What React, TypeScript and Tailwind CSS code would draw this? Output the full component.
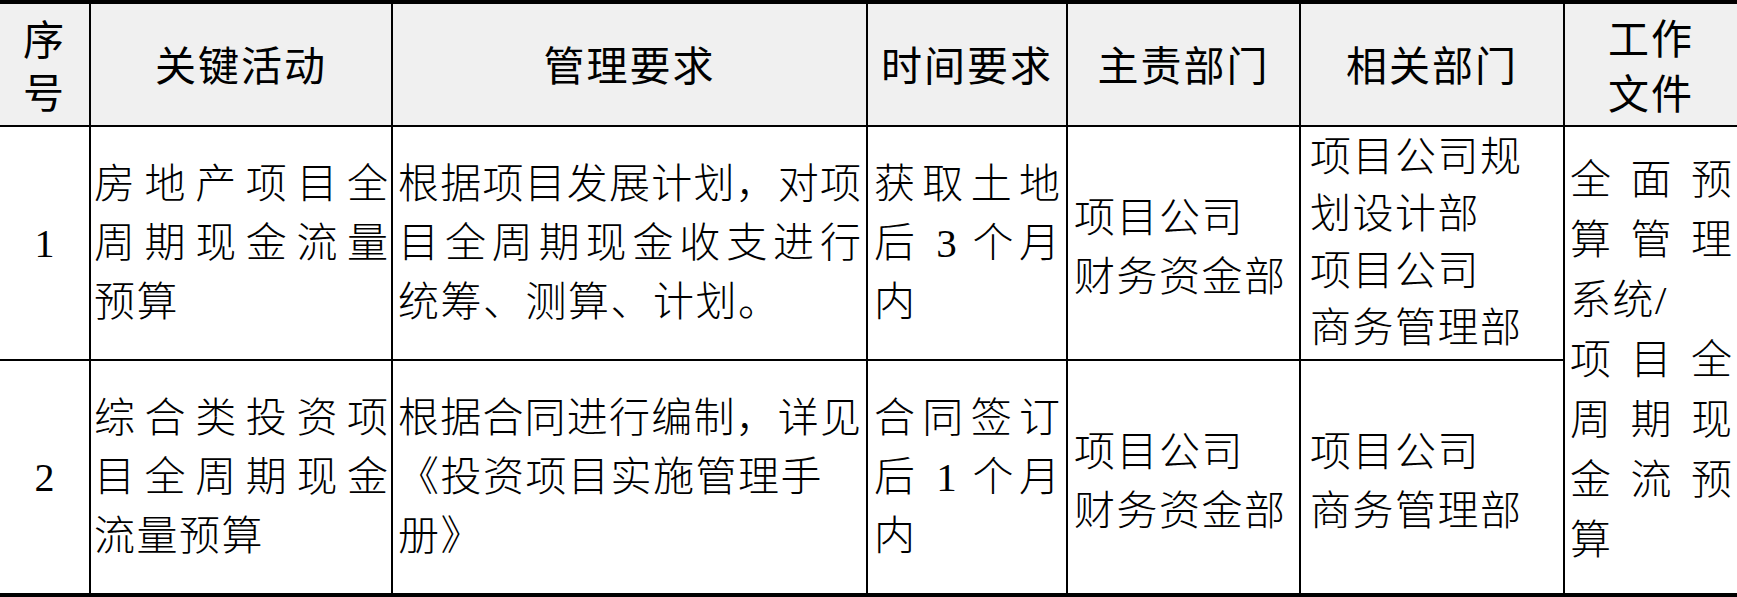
type Line = { t: string; j?: boolean };

const bodyLine = "tracking-[1.5px]";
const justLine = "tracking-normal text-justify [text-align-last:justify]";

function Cell({
  lines,
  className = "",
  lead = "leading-[59px]",
}: {
  lines: Line[];
  className?: string;
  lead?: string;
}) {
  return (
    <div className={`flex flex-col justify-center bg-white font-light ${lead} ${className}`}>
      {lines.map((l, i) => (
        <div key={i} className={l.j ? justLine : bodyLine}>
          {l.t}
        </div>
      ))}
    </div>
  );
}

function Head({ lines, lead = "leading-[59px]" }: { lines: string[]; lead?: string }) {
  return (
    <div className={`flex flex-col items-center justify-center bg-[#f0f0f0] pt-[6px] font-normal tracking-[2px] ${lead}`}>
      {lines.map((l) => (
        <div key={l}>{l}</div>
      ))}
    </div>
  );
}

function Num({ n }: { n: string }) {
  return (
    <div className="flex items-center justify-center bg-white pt-[2px] text-[40px]">
      {n}
    </div>
  );
}

export default function App() {
  return (
    <div className="w-[1737px] h-[597px] bg-white text-black text-[41px] font-['Liberation_Serif','Noto_Sans_CJK_SC',serif]">
      <div className="grid grid-cols-[89px_300px_473px_198px_231px_262px_172px] grid-rows-[121px_232px_232px] gap-[2px] bg-black pt-[4px] pb-[4px]">
        <Head lines={["序", "号"]} lead="leading-[53px]" />
        <Head lines={["关键活动"]} />
        <Head lines={["管理要求"]} />
        <Head lines={["时间要求"]} />
        <Head lines={["主责部门"]} />
        <Head lines={["相关部门"]} />
        <Head lines={["工作", "文件"]} lead="leading-[55px]" />

        <Num n="1" />
        <Cell
          className="px-[3px]"
          lines={[
            { t: "房地产项目全", j: true },
            { t: "周期现金流量", j: true },
            { t: "预算" },
          ]}
        />
        <Cell
          className="px-[5px]"
          lines={[
            { t: "根据项目发展计划，对项", j: true },
            { t: "目全周期现金收支进行", j: true },
            { t: "统筹、测算、计划。" },
          ]}
        />
        <Cell
          className="px-[6px]"
          lines={[
            { t: "获取土地", j: true },
            { t: "后 3 个月", j: true },
            { t: "内" },
          ]}
        />
        <Cell className="pl-[6px] pt-[10px]" lines={[{ t: "项目公司" }, { t: "财务资金部" }]} />
        <Cell
          className="pl-[9px]"
          lead="leading-[57px]"
          lines={[
            { t: "项目公司规" },
            { t: "划设计部" },
            { t: "项目公司" },
            { t: "商务管理部" },
          ]}
        />
        <Cell
          className="row-span-2 px-[5px]"
          lead="leading-[60px]"
          lines={[
            { t: "全面预", j: true },
            { t: "算管理", j: true },
            { t: "系统/" },
            { t: "项目全", j: true },
            { t: "周期现", j: true },
            { t: "金流预", j: true },
            { t: "算" },
          ]}
        />

        <Num n="2" />
        <Cell
          className="px-[3px]"
          lines={[
            { t: "综合类投资项", j: true },
            { t: "目全周期现金", j: true },
            { t: "流量预算" },
          ]}
        />
        <Cell
          className="px-[5px]"
          lines={[
            { t: "根据合同进行编制，详见", j: true },
            { t: "《投资项目实施管理手" },
            { t: "册》" },
          ]}
        />
        <Cell
          className="px-[6px]"
          lines={[
            { t: "合同签订", j: true },
            { t: "后 1 个月", j: true },
            { t: "内" },
          ]}
        />
        <Cell className="pl-[6px] pt-[10px]" lines={[{ t: "项目公司" }, { t: "财务资金部" }]} />
        <Cell className="pl-[9px] pt-[10px]" lines={[{ t: "项目公司" }, { t: "商务管理部" }]} />
      </div>
    </div>
  );
}
